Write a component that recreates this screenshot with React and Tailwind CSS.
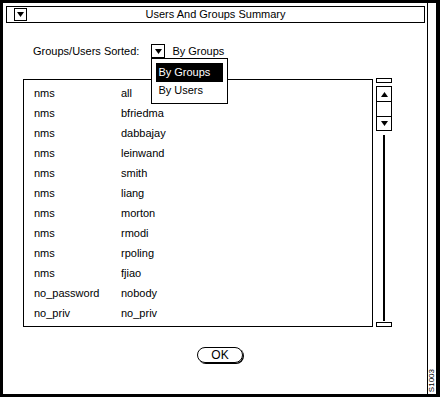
import React from "react";

const Tri = ({ up }) => (
  <svg width="7" height="5" viewBox="0 0 7 5" className="block">
    <polygon points={up ? "3.5,0 7,5 0,5" : "0,0 7,0 3.5,5"} fill="black" />
  </svg>
);

const rows = [
  ["nms", "all"],
  ["nms", "bfriedma"],
  ["nms", "dabbajay"],
  ["nms", "leinwand"],
  ["nms", "smith"],
  ["nms", "liang"],
  ["nms", "morton"],
  ["nms", "rmodi"],
  ["nms", "rpoling"],
  ["nms", "fjiao"],
  ["no_password", "nobody"],
  ["no_priv", "no_priv"],
];

export default function App() {
  return (
    <div className="w-[440px] h-[397px] bg-white border-l-[3px] border-t-[3px] border-b-[3px] border-r-[4px] border-black flex font-['Liberation_Sans',Arial,sans-serif] text-[11px] leading-none text-black">
      <div className="w-[425px] flex flex-col border-r border-black">
        {/* Title bar */}
        <div className="mt-[3px] ml-[3px] mr-[2px] h-[17px] border border-black grid grid-cols-[1fr_auto_1fr] items-center">
          <div className="pl-[7px] flex">
            <div className="w-[13px] h-[13px] border border-black flex items-center justify-center">
              <Tri />
            </div>
          </div>
          <div>Users And Groups Summary</div>
          <div />
        </div>

        {/* Sort row */}
        <div className="mt-[21px] h-[14px] flex items-center pl-[30px]">
          <span>Groups/Users Sorted:</span>
          <div className="relative ml-[12px] w-[14px] h-[14px] border border-black flex items-center justify-center">
            <Tri />
            <div className="absolute left-[-1px] top-[13px] w-[77px] h-[46px] border border-black bg-white p-[4px] flex flex-col z-10">
              <div className="h-[20px] bg-black text-white pl-[2px] flex items-center">By Groups</div>
              <div className="h-[18px] pl-[2px] flex items-center">By Users</div>
            </div>
          </div>
          <span className="ml-[7px]">By Groups</span>
        </div>

        {/* List + scrollbar */}
        <div className="mt-[21px] flex items-start pl-[20px] gap-[3px]">
          <div className="w-[350px] h-[248px] border border-black pt-[3px] pl-[10px]">
            {rows.map(([a, b], i) => (
              <div key={i} className="h-[20px] grid grid-cols-[87px_1fr] items-center">
                <span>{a}</span>
                <span>{b}</span>
              </div>
            ))}
          </div>
          <div className="w-[16px] h-[249px] -mt-px flex flex-col items-center">
            <div className="w-full h-[5px] border border-black" />
            <div className="mt-[3px] w-full h-[45px] border border-black flex flex-col">
              <div className="h-[15px] border-b border-black flex items-center justify-center">
                <Tri up />
              </div>
              <div className="h-[15px] border-b border-black" />
              <div className="flex-1 flex items-center justify-center">
                <Tri />
              </div>
            </div>
            <div className="mt-[4px] w-[2px] flex-1 bg-black" />
            <div className="mt-[1px] w-full h-[5px] border border-black" />
          </div>
        </div>

        {/* OK button */}
        <div className="mt-[20px] pl-[194px] flex">
          <div className="w-[46px] h-[16px] rounded-full border border-black shadow-[1px_1px_0_black] flex items-center justify-center text-[12px]">
            OK
          </div>
        </div>
      </div>

      {/* Right strip */}
      <div className="w-[8px] flex flex-col justify-end items-center pb-[2px]">
        <span className="[writing-mode:vertical-rl] rotate-180 text-[8px] leading-[8px]">S1003</span>
      </div>
    </div>
  );
}
